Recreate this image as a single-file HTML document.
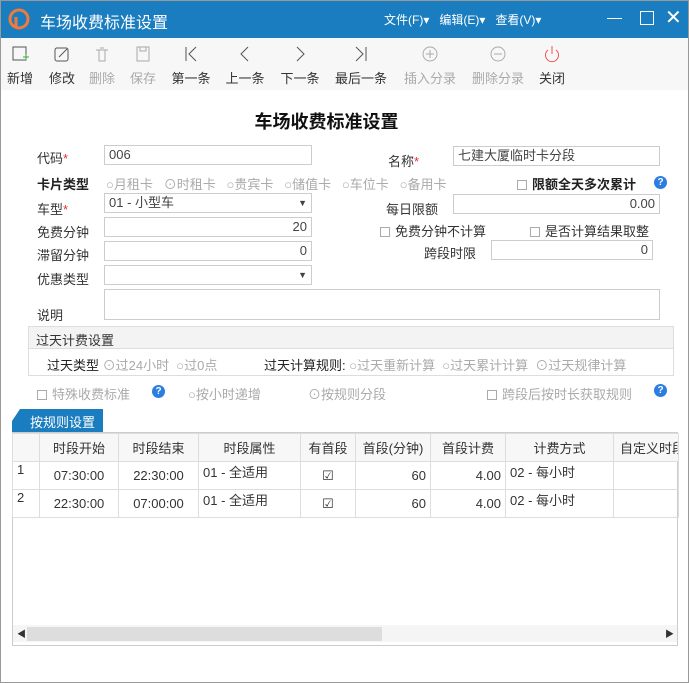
<!DOCTYPE html>
<html><head><meta charset="utf-8"><style>
*{margin:0;padding:0;box-sizing:border-box}
body{width:689px;height:683px;position:relative;overflow:hidden;background:#fff;font-family:"Liberation Sans","Noto Sans CJK SC",sans-serif;font-size:13px;color:#333}
.a{position:absolute;white-space:nowrap}
.in{position:absolute;border:1px solid #ccc;background:#fff;height:20px;font-size:13px;padding:0 4px;line-height:18px;color:#444}
.r{text-align:right}
.g{color:#aaa}
.star{color:#d33}
.q{position:absolute;width:13px;height:13px;border-radius:50%;background:#2c7de0;color:#fff;font-size:10px;font-weight:bold;text-align:center;line-height:13px}
.cb{display:inline-block;width:10px;height:10px;border:1px solid #aaa;vertical-align:-1px;margin-right:5px}
.tb{position:absolute;top:45px;width:60px;text-align:center;font-size:13px;white-space:nowrap}
.tb svg{display:block;margin:0 auto 5px}
table{border-collapse:collapse;position:absolute;left:12px;top:433px;font-size:13px;table-layout:fixed;width:666px}
td,th{border:1px solid #ddd;height:28px;padding:0 4px;white-space:nowrap;overflow:hidden}
th{font-weight:normal;background:#f7f7f7}
</style></head><body>
<div class="a" style="left:0;top:0;width:689px;height:38px;background:#1a7dc0"></div>
<svg class="a" style="left:8px;top:8px" width="22" height="22"><circle cx="11" cy="11" r="9" fill="none" stroke="#f07a3a" stroke-width="3"/><path d="M8 20 L8 9" stroke="#f07a3a" stroke-width="3"/></svg>
<div class="a" style="left:40px;top:9px;color:#fff;font-size:16px">车场收费标准设置</div>
<div class="a" style="left:384px;top:11px;color:#fff;font-size:12px">文件(F)▾ &nbsp;&nbsp;编辑(E)▾ &nbsp;&nbsp;查看(V)▾</div>
<div class="a" style="left:607px;top:18px;width:15px;height:1px;background:#fff"></div>
<div class="a" style="left:640px;top:11px;width:14px;height:14px;border:1.5px solid #fff"></div>
<div class="a" style="left:665px;top:5px;color:#fff;font-size:20px">✕</div>
<div class="a" style="left:0;top:38px;width:689px;height:52px;background:#f7f7f8"></div>
<div class="tb" style="left:-10px"><svg width="18" height="18"><rect x="2" y="2" width="13" height="13" fill="none" stroke="#555"/><path d="M12 12h6M15 9v6" stroke="#3a3"/></svg>新增</div>
<div class="tb" style="left:32px"><svg width="18" height="18"><rect x="2" y="3" width="13" height="13" rx="2" fill="none" stroke="#555"/><path d="M6 12l8-8" stroke="#555"/></svg>修改</div>
<div class="tb g" style="left:72px"><svg width="18" height="18"><path d="M3 5h12M6 5v11h6V5M7 3h4" fill="none" stroke="#aaa"/></svg>删除</div>
<div class="tb g" style="left:113px"><svg width="18" height="18"><rect x="3" y="2" width="12" height="14" fill="none" stroke="#aaa"/><rect x="6" y="2" width="6" height="4" fill="none" stroke="#aaa"/></svg>保存</div>
<div class="tb" style="left:161px"><svg width="18" height="18"><path d="M4 2v14M14 2L7 9l7 7" fill="none" stroke="#555"/></svg>第一条</div>
<div class="tb" style="left:215px"><svg width="18" height="18"><path d="M12 2L5 9l7 7" fill="none" stroke="#555"/></svg>上一条</div>
<div class="tb" style="left:270px"><svg width="18" height="18"><path d="M6 2l7 7-7 7" fill="none" stroke="#555"/></svg>下一条</div>
<div class="tb" style="left:331px"><svg width="18" height="18"><path d="M4 2l7 7-7 7M14 2v14" fill="none" stroke="#555"/></svg>最后一条</div>
<div class="tb g" style="left:400px"><svg width="18" height="18"><circle cx="9" cy="9" r="7" fill="none" stroke="#aaa"/><path d="M5 9h8M9 5v8" stroke="#aaa"/></svg>插入分录</div>
<div class="tb g" style="left:468px"><svg width="18" height="18"><circle cx="9" cy="9" r="7" fill="none" stroke="#aaa"/><path d="M5 9h8" stroke="#aaa"/></svg>删除分录</div>
<div class="tb" style="left:522px"><svg width="18" height="18"><path d="M5 5a6.5 6.5 0 1 0 8 0M9 1v8" fill="none" stroke="#e55"/></svg>关闭</div>
<div class="a" style="left:0;top:108px;width:689px;text-align:center;font-size:18px;font-weight:bold;color:#111"><span style="margin-left:-36px">车场收费标准设置</span></div>
<div class="a" style="left:37px;top:148px">代码<span class="star">*</span></div>
<div class="in" style="left:104px;top:145px;width:208px">006</div>
<div class="a" style="left:388px;top:151px">名称<span class="star">*</span></div>
<div class="in" style="left:453px;top:146px;width:207px">七建大厦临时卡分段</div>
<div class="a" style="left:37px;top:174px;font-weight:bold;color:#222">卡片类型</div>
<div class="a g" style="left:106px;top:174px">○月租卡 &nbsp;&nbsp;⊙时租卡 &nbsp;&nbsp;○贵宾卡 &nbsp;&nbsp;○储值卡 &nbsp;&nbsp;○车位卡 &nbsp;&nbsp;○备用卡</div>
<div class="a" style="left:517px;top:174px;font-weight:bold;color:#222"><span class="cb"></span>限额全天多次累计</div>
<div class="q" style="left:654px;top:176px">?</div>
<div class="a" style="left:37px;top:199px">车型<span class="star">*</span></div>
<div class="in" style="left:104px;top:193px;width:208px">01 - 小型车<span style="float:right;font-size:9px">▼</span></div>
<div class="a" style="left:386px;top:199px">每日限额</div>
<div class="in r" style="left:453px;top:194px;width:207px">0.00</div>
<div class="a" style="left:37px;top:222px">免费分钟</div>
<div class="in r" style="left:104px;top:217px;width:208px">20</div>
<div class="a" style="left:380px;top:221px"><span class="cb"></span>免费分钟不计算</div>
<div class="a" style="left:530px;top:221px"><span class="cb"></span>是否计算结果取整</div>
<div class="a" style="left:37px;top:245px">滞留分钟</div>
<div class="in r" style="left:104px;top:241px;width:208px">0</div>
<div class="a" style="left:424px;top:243px">跨段时限</div>
<div class="in r" style="left:491px;top:240px;width:162px">0</div>
<div class="a" style="left:37px;top:269px">优惠类型</div>
<div class="in" style="left:104px;top:265px;width:208px"><span style="float:right;font-size:9px">▼</span></div>
<div class="a" style="left:37px;top:305px">说明</div>
<div class="in" style="left:104px;top:289px;width:556px;height:31px"></div>
<div class="a" style="left:28px;top:326px;width:646px;height:50px;border:1px solid #ddd"></div>
<div class="a" style="left:29px;top:327px;width:644px;height:22px;background:#f3f3f3;border-bottom:1px solid #ddd"></div>
<div class="a" style="left:36px;top:330px">过天计费设置</div>
<div class="a" style="left:47px;top:355px;color:#222">过天类型 <span class="g">⊙过24小时 &nbsp;○过0点</span></div>
<div class="a" style="left:264px;top:355px;color:#222">过天计算规则: <span class="g">○过天重新计算 &nbsp;○过天累计计算 &nbsp;⊙过天规律计算</span></div>
<div class="a g" style="left:37px;top:384px"><span class="cb"></span>特殊收费标准</div>
<div class="q" style="left:152px;top:385px">?</div>
<div class="a g" style="left:188px;top:384px">○按小时递增</div>
<div class="a g" style="left:308px;top:384px">⊙按规则分段</div>
<div class="a g" style="left:487px;top:384px"><span class="cb"></span>跨段后按时长获取规则</div>
<div class="q" style="left:654px;top:384px">?</div>
<div class="a" style="left:12px;top:409px;width:91px;height:24px;background:#1a7dc0;color:#fff;padding:3px 0 0 18px;clip-path:polygon(8px 0,100% 0,100% 100%,0 100%,0 12px)">按规则设置</div>
<div class="a" style="left:12px;top:432px;width:666px;height:214px;border:1px solid #ccc"></div>
<table>
<colgroup><col style="width:27px"><col style="width:79px"><col style="width:80px"><col style="width:102px"><col style="width:55px"><col style="width:75px"><col style="width:75px"><col style="width:108px"><col style="width:65px"></colgroup>
<tr><th></th><th>时段开始</th><th>时段结束</th><th>时段属性</th><th>有首段</th><th>首段(分钟)</th><th>首段计费</th><th>计费方式</th><th style="text-align:left;padding-left:6px">自定义时段</th></tr>
<tr><td style="vertical-align:top">1</td><td style="text-align:center">07:30:00</td><td style="text-align:center">22:30:00</td><td style="vertical-align:top">01 - 全适用</td><td style="text-align:center">☑</td><td class="r">60</td><td class="r">4.00</td><td style="vertical-align:top">02 - 每小时</td><td></td></tr>
<tr><td style="vertical-align:top">2</td><td style="text-align:center">22:30:00</td><td style="text-align:center">07:00:00</td><td style="vertical-align:top">01 - 全适用</td><td style="text-align:center">☑</td><td class="r">60</td><td class="r">4.00</td><td style="vertical-align:top">02 - 每小时</td><td></td></tr>
</table>
<div class="a" style="left:13px;top:625px;width:664px;height:17px;background:#f5f5f5"></div>
<div class="a" style="left:27px;top:627px;width:355px;height:14px;background:#ddd"></div>
<div class="a" style="left:17px;top:627px;font-size:9px">◀</div>
<div class="a" style="left:665px;top:627px;font-size:9px">▶</div>
<div class="a" style="left:0;top:0;width:689px;height:683px;border:1px solid #999"></div>
</body></html>
